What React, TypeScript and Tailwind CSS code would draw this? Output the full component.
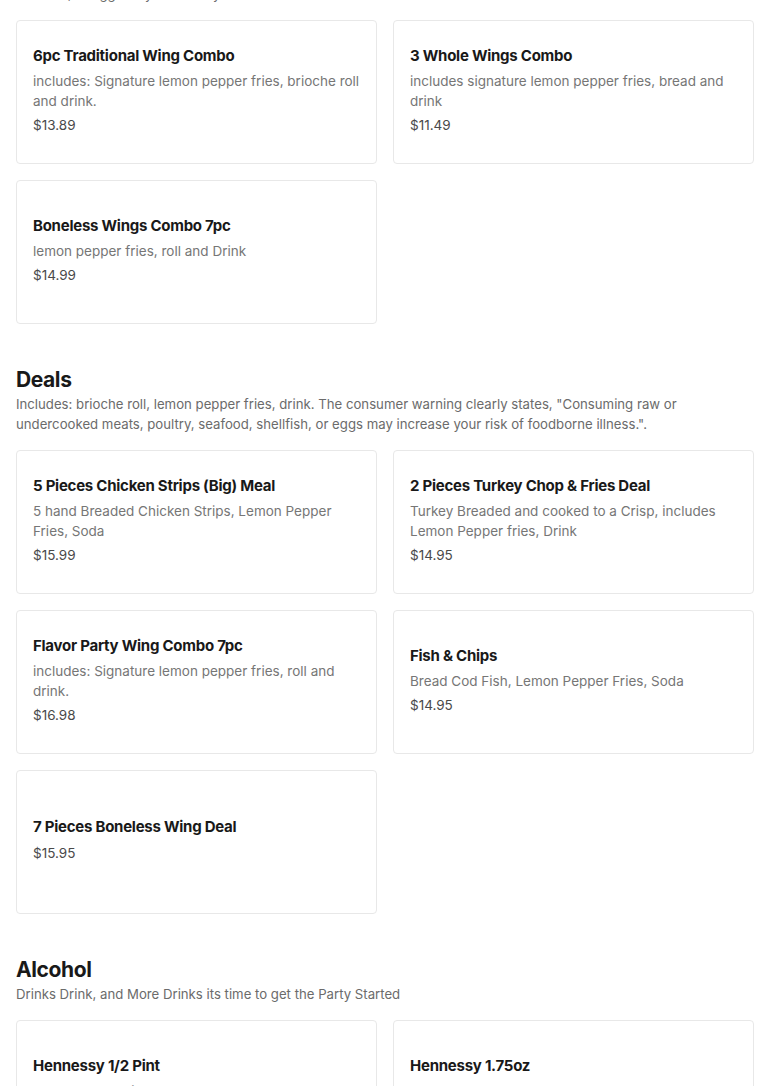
import React from 'react';

interface Item {
  name: string;
  description?: string;
  price: string;
}

interface Section {
  title?: string;
  description?: string;
  items: Item[];
}

const sections: Section[] = [
  {
    description: 'shellfish, or eggs may increase your risk of foodborne illness.',
    items: [
      {
        name: '6pc Traditional Wing Combo',
        description: 'includes: Signature lemon pepper fries, brioche roll and drink.',
        price: '$13.89',
      },
      {
        name: '3 Whole Wings Combo',
        description: 'includes signature lemon pepper fries, bread and drink',
        price: '$11.49',
      },
      {
        name: 'Boneless Wings Combo 7pc',
        description: 'lemon pepper fries, roll and Drink',
        price: '$14.99',
      },
    ],
  },
  {
    title: 'Deals',
    description:
      'Includes: brioche roll, lemon pepper fries, drink. The consumer warning clearly states, "Consuming raw or undercooked meats, poultry, seafood, shellfish, or eggs may increase your risk of foodborne illness.".',
    items: [
      {
        name: '5 Pieces Chicken Strips (Big) Meal',
        description: '5 hand Breaded Chicken Strips, Lemon Pepper Fries, Soda',
        price: '$15.99',
      },
      {
        name: '2 Pieces Turkey Chop & Fries Deal',
        description: 'Turkey Breaded and cooked to a Crisp, includes Lemon Pepper fries, Drink',
        price: '$14.95',
      },
      {
        name: 'Flavor Party Wing Combo 7pc',
        description: 'includes: Signature lemon pepper fries, roll and drink.',
        price: '$16.98',
      },
      {
        name: 'Fish & Chips',
        description: 'Bread Cod Fish, Lemon Pepper Fries, Soda',
        price: '$14.95',
      },
      {
        name: '7 Pieces Boneless Wing Deal',
        price: '$15.95',
      },
    ],
  },
  {
    title: 'Alcohol',
    description: 'Drinks Drink, and More Drinks its time to get the Party Started',
    items: [
      {
        name: 'Hennessy 1/2 Pint',
        description: 'Hennessy 1/2 Pint',
        price: '$24.99',
      },
      {
        name: 'Hennessy 1.75oz',
        description: 'Hennessy cognac 1.75oz bottle, 40% ABV',
        price: '$89.99',
      },
    ],
  },
];

const ItemCard: React.FC<{ item: Item }> = ({ item }) => (
  <div className="h-[144px] border border-[#e8e8e8] rounded-[4px] bg-white px-4 pb-1.5 flex flex-col justify-center">
    <h3 className="text-[15px] leading-6 font-bold text-[#191919] tracking-[-0.25px]">{item.name}</h3>
    {item.description && (
      <p className="mt-[3px] text-[13.5px] leading-5 text-[#767676]">{item.description}</p>
    )}
    <p className="mt-1 text-[13.5px] leading-5 text-[#494949]">{item.price}</p>
  </div>
);

export default function App() {
  return (
    <div
      className="min-h-screen bg-white px-4 overflow-hidden"
      style={{ fontFamily: 'Inter, "Noto Sans", sans-serif' }}
    >
      <div className="-mt-4">
        {sections.map((section, i) => (
          <section key={i} className={i > 0 ? 'mt-[41px]' : ''}>
            {section.title && (
              <h2 className="text-[21px] leading-[29px] font-bold text-[#191919] tracking-[-0.4px]">
                {section.title}
              </h2>
            )}
            {section.description && (
              <p className="text-[13.2px] leading-5 text-[#6b6b6b]">{section.description}</p>
            )}
            <div className="mt-4 grid grid-cols-2 gap-4">
              {section.items.map(item => (
                <ItemCard key={item.name} item={item} />
              ))}
            </div>
          </section>
        ))}
      </div>
    </div>
  );
}
